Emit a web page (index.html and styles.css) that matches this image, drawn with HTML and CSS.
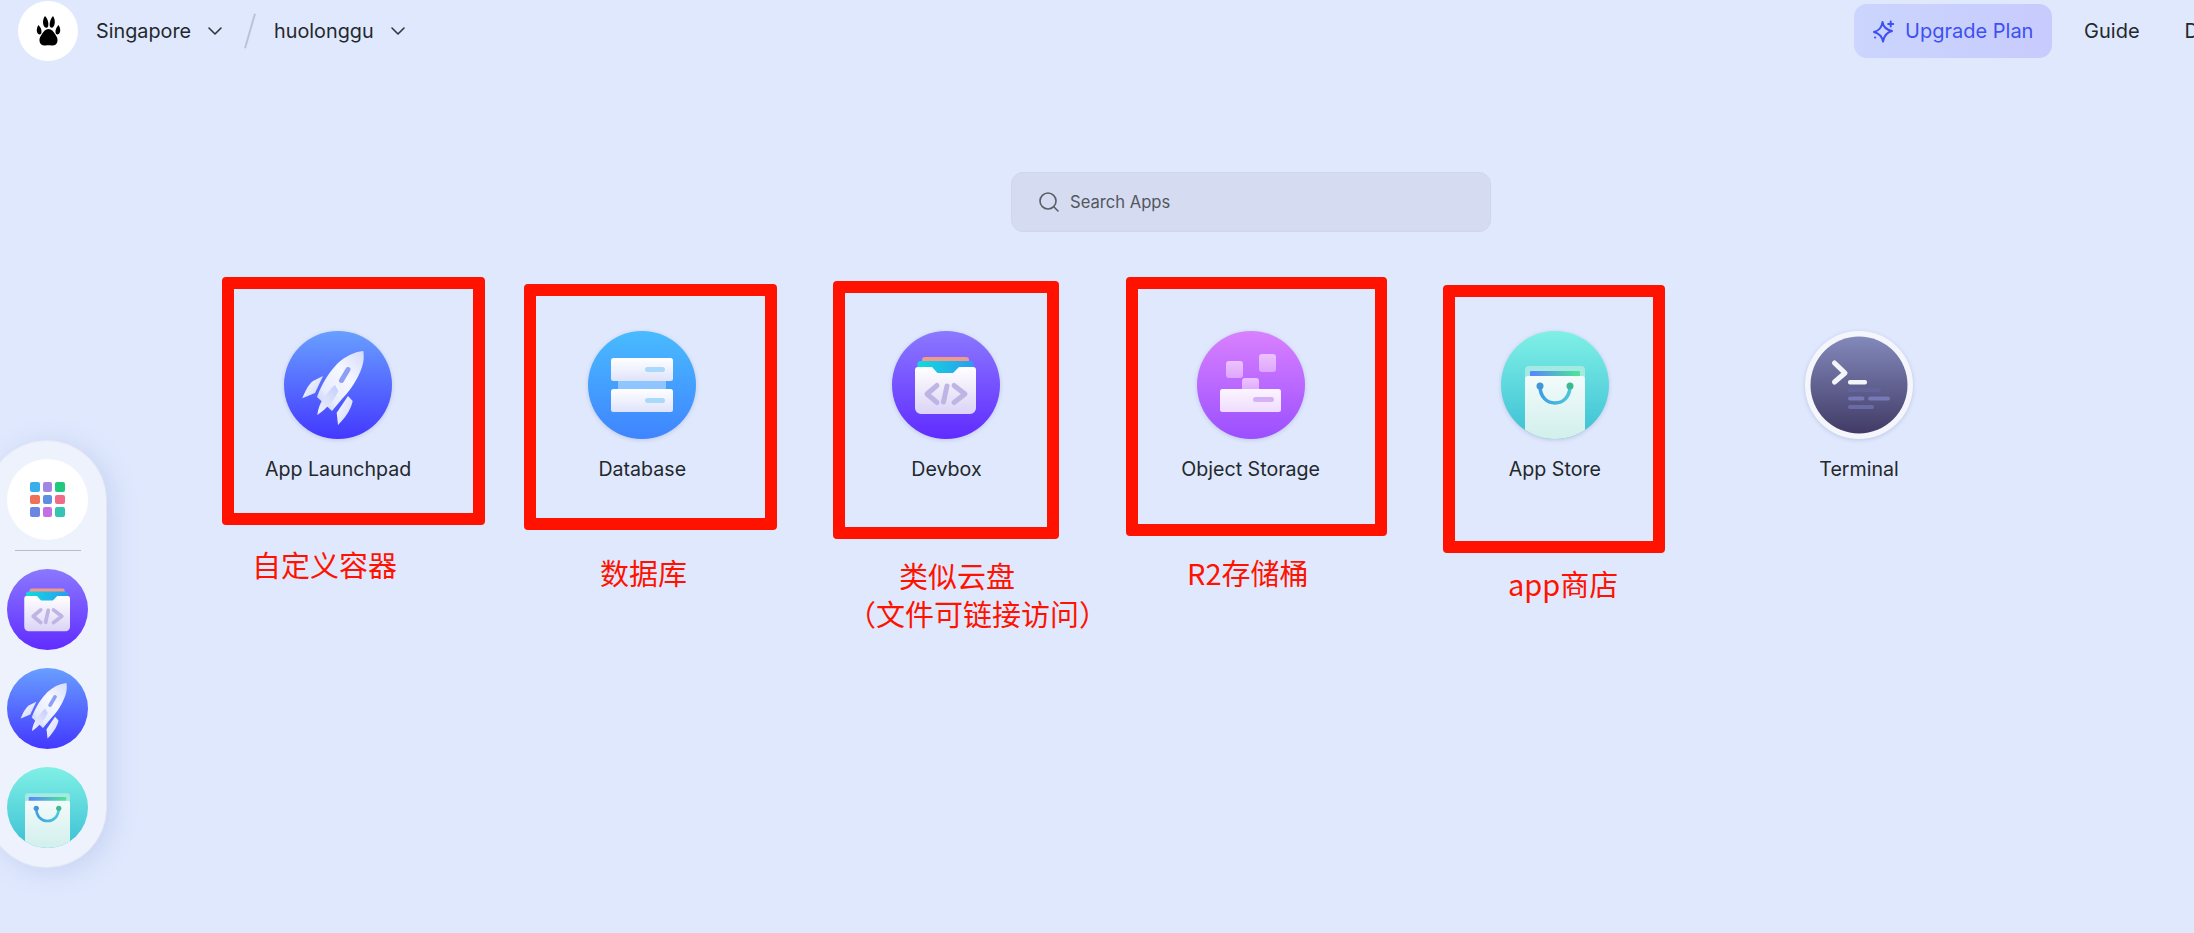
FILE: index.html
```html
<!DOCTYPE html>
<html lang="en">
<head>
  <meta charset="UTF-8" />
  <meta name="viewport" content="width=device-width, initial-scale=1" />
  <title>Desktop</title>
  <link rel="stylesheet" href="styles.css">
</head>
<body>

  <!-- shared gradients and icons -->
  <svg class="svg-defs" xmlns="http://www.w3.org/2000/svg" aria-hidden="true">
    <defs>
      <linearGradient id="gRocket" x1="0" y1="0" x2="0" y2="1"><stop offset="0" stop-color="#689fff"/><stop offset="1" stop-color="#4338ff"/></linearGradient>
      <linearGradient id="gDb" x1="0" y1="0" x2="0" y2="1"><stop offset="0" stop-color="#49bbff"/><stop offset="1" stop-color="#3f84ff"/></linearGradient>
      <linearGradient id="gDev" x1="0" y1="0" x2="0" y2="1"><stop offset="0" stop-color="#8b78ff"/><stop offset="1" stop-color="#602cff"/></linearGradient>
      <linearGradient id="gObj" x1="0" y1="0" x2="0" y2="1"><stop offset="0" stop-color="#d981ff"/><stop offset="1" stop-color="#9b4fff"/></linearGradient>
      <linearGradient id="gStore" x1="0" y1="0" x2="0" y2="1"><stop offset="0" stop-color="#80f0e6"/><stop offset="1" stop-color="#3cc0d4"/></linearGradient>
      <linearGradient id="gTerm" x1="0" y1="0" x2="0" y2="1"><stop offset="0" stop-color="#8389bb"/><stop offset="1" stop-color="#413b66"/></linearGradient>
      <linearGradient id="gWhite" x1="0" y1="0" x2="0" y2="1"><stop offset="0" stop-color="#ffffff"/><stop offset="1" stop-color="#dfe3fb"/></linearGradient>
      <linearGradient id="gBody" x1="1" y1="0" x2="0" y2="1"><stop offset="0" stop-color="#d5dbfc"/><stop offset=".4" stop-color="#f6f8ff"/><stop offset=".75" stop-color="#e8ecff"/><stop offset="1" stop-color="#bcc5f8"/></linearGradient>
      <linearGradient id="gFin" x1="0" y1="0" x2="1" y2="1"><stop offset="0" stop-color="#fbfcff"/><stop offset="1" stop-color="#ccd3fb"/></linearGradient>
      <linearGradient id="gFinMid" x1="0" y1="1" x2="1" y2="0"><stop offset="0" stop-color="#f0f3ff"/><stop offset="1" stop-color="#c5cdfb"/></linearGradient>
      <linearGradient id="gLid" x1="0" y1="0" x2="1" y2="0"><stop offset="0" stop-color="#10dbdc"/><stop offset="1" stop-color="#2b9cf2"/></linearGradient>
      <linearGradient id="gFile" x1="0" y1="0" x2="0" y2="1"><stop offset="0" stop-color="#ffffff"/><stop offset="1" stop-color="#dcd3f6"/></linearGradient>
      <linearGradient id="gBox" x1="0" y1="0" x2="0" y2="1"><stop offset="0" stop-color="#fbf5ff"/><stop offset="1" stop-color="#efdcff"/></linearGradient>
      <linearGradient id="gCube" x1="0" y1="0" x2="0" y2="1"><stop offset="0" stop-color="#ecc3ff"/><stop offset="1" stop-color="#dea6fe"/></linearGradient>
      <linearGradient id="gBag" x1="0" y1="0" x2="0" y2="1"><stop offset="0" stop-color="#f3fbfb"/><stop offset="1" stop-color="#cdeeea"/></linearGradient>
      <linearGradient id="gStripe" x1="0" y1="0" x2="1" y2="0"><stop offset="0" stop-color="#5a84ff"/><stop offset="1" stop-color="#4ce795"/></linearGradient>
      <linearGradient id="gHandle" x1="0" y1="0" x2="1" y2="0"><stop offset="0" stop-color="#3d9fe6"/><stop offset="1" stop-color="#4bc6dd"/></linearGradient>
      <clipPath id="clipCircle"><circle cx="54" cy="54" r="54"/></clipPath>

      <symbol id="iconRocket" viewBox="0 0 108 108">
        <circle cx="54" cy="54" r="54" fill="url(#gRocket)"/>
        <path d="M18.300 67.300C21 60 25 53 29 50L39 45 31 62Z" fill="url(#gFin)"/>
        <path d="M54 94L52.700 81.700 64 65 68.700 70C67 79 60 88 54 94Z" fill="url(#gFin)"/>
        <path d="M79.300 20C70 21 62 25 54 32 46 40 38 52 33 66L48 80 58 68C66 60 74 48 78 36 80 30 80 25 79.300 20Z" fill="url(#gBody)"/>
        <path d="M33.300 84C34 78 36 72 39.300 68 43 62 47 57 51 54L54.300 60C52 65 49 70 46 73 42 77 38 81 33.300 84Z" fill="url(#gFinMid)"/>
        <path d="M64 38.500L57.500 49.500" stroke="#8f9ff5" stroke-width="5" stroke-linecap="round" fill="none"/>
      </symbol>

      <symbol id="iconDb" viewBox="0 0 108 108">
        <circle cx="54" cy="54" r="54" fill="url(#gDb)"/>
        <rect x="30" y="48" width="48" height="12" fill="#fff" opacity=".4"/>
        <rect x="23" y="27" width="62" height="23" rx="2.5" fill="url(#gWhite)"/>
        <rect x="23" y="58" width="62" height="23" rx="2.5" fill="url(#gWhite)"/>
        <rect x="57" y="36" width="20" height="5" rx="2.5" fill="#a9dafc"/>
        <rect x="57" y="67" width="20" height="5" rx="2.5" fill="#a9dafc"/>
      </symbol>

      <symbol id="iconDev" viewBox="0 0 108 108">
        <circle cx="54" cy="54" r="54" fill="url(#gDev)"/>
        <rect x="30" y="26" width="47" height="12" rx="3" fill="#f29a88"/>
        <rect x="25.500" y="30" width="56" height="14" rx="3" fill="url(#gLid)"/>
        <path d="M23 39a3 3 0 0 1 3-3H40l5 5.500a2 2 0 0 0 1.500.500H60a2 2 0 0 0 1.500-.500L67 36H81a3 3 0 0 1 3 3V77a6 6 0 0 1-6 6H29a6 6 0 0 1-6-6Z" fill="url(#gFile)"/>
        <path d="M45 54.500L35 63 45 71.500M62 54.500L73 63 62 71.500M55 55L51.500 71" stroke="#bdb6e5" stroke-width="5" stroke-linecap="round" stroke-linejoin="round" fill="none"/>
      </symbol>

      <symbol id="iconObj" viewBox="0 0 108 108">
        <circle cx="54" cy="54" r="54" fill="url(#gObj)"/>
        <rect x="29" y="30" width="17" height="17" rx="3" fill="url(#gCube)"/>
        <rect x="62" y="23" width="17" height="18" rx="3" fill="url(#gCube)"/>
        <rect x="45" y="47" width="17" height="14" rx="3" fill="url(#gCube)"/>
        <rect x="23" y="58" width="61" height="23" rx="2.500" fill="url(#gBox)"/>
        <rect x="56" y="66" width="21" height="5" rx="2.500" fill="#d6b0f6"/>
      </symbol>

      <symbol id="iconStore" viewBox="0 0 108 108">
        <circle cx="54" cy="54" r="54" fill="url(#gStore)"/>
        <g clip-path="url(#clipCircle)">
          <rect x="24" y="35" width="60" height="20" rx="4" fill="#a3eae3"/>
          <rect x="29" y="40" width="50" height="8" rx="1" fill="url(#gStripe)"/>
          <rect x="24" y="45" width="60" height="70" rx="3" fill="url(#gBag)"/>
        </g>
        <path d="M39 55C39 66 46 72 54 72S69 66 69 55" stroke="url(#gHandle)" stroke-width="3.500" fill="none"/>
        <circle cx="39" cy="55" r="3.500" fill="#3f97d8"/>
        <circle cx="69" cy="55" r="3.500" fill="#3dba92"/>
      </symbol>

      <symbol id="iconTerm" viewBox="0 0 108 108">
        <circle cx="54" cy="54" r="54" fill="#f5f6fb"/>
        <circle cx="54" cy="54" r="48.500" fill="url(#gTerm)"/>
        <path d="M29.500 32L40 42 29.500 51" stroke="#f4f5fb" stroke-width="5" stroke-linecap="round" stroke-linejoin="round" fill="none"/>
        <rect x="43" y="49" width="19" height="4.500" rx="2" fill="#f4f5fb"/>
        <rect x="43" y="57" width="33" height="4" rx="2" fill="#62639a"/>
        <rect x="43" y="65.500" width="16.500" height="4" rx="2" fill="#7778b8"/>
        <rect x="63" y="65.500" width="22" height="4" rx="2" fill="#7778b8"/>
        <rect x="43" y="74" width="26" height="4" rx="2" fill="#6a6ba6"/>
      </symbol>
    </defs>
  </svg>

  <div class="desktop">

    <header class="topbar">
      <div class="logo">
        <svg width="25" height="30" viewBox="0 0 25 30">
          <path d="M2.500 9C4.500 11 5.800 14 5.500 16.500 5.200 18.500 3.500 19 2 17.800 .3 16 .3 12 2.500 9Z"/>
          <path d="M9 0C11.500 2.500 12.800 6 12.300 9.500 12 12 9.800 12.500 8.400 10.800 6.500 8 6.500 3.500 9 0Z"/>
          <path d="M17 0C19 3 19.500 7.500 17.600 10.500 16.300 12.500 14 12 13.700 9.500 13.300 6 14.800 2.500 17 0Z"/>
          <path d="M22.500 9C24.700 12 24.700 16 23 17.800 21.500 19 19.800 18.500 19.500 16.500 19.200 14 20.500 11 22.500 9Z"/>
          <path d="M12.500 13C15.500 13 17.500 15.500 19 18 20.500 20.500 21.800 22 21.500 25 21.200 28.500 18 30 15.500 29.500 13.500 29 11.500 29 9.500 29.500 7 30 3.800 28.500 3.500 25 3.200 22 4.500 20.500 6 18 7.500 15.500 9.500 13 12.500 13Z"/>
        </svg>
      </div>
      <span class="crumb">Singapore</span>
      <svg class="chevron" width="14" height="8" viewBox="0 0 14 8"><path d="M1 1l6 6 6-6"/></svg>
      <span class="crumb-slash"></span>
      <span class="crumb">huolonggu</span>
      <svg class="chevron" width="14" height="8" viewBox="0 0 14 8"><path d="M1 1l6 6 6-6"/></svg>

      <div class="topbar-right">
        <button class="upgrade">
          <svg width="23" height="23" viewBox="0 0 23 23" fill="none" stroke="#3d50f2" stroke-width="2" stroke-linejoin="round" stroke-linecap="round">
            <path d="M10.500 2Q11.500 9 20 11 12.500 13 11 21.500 9.500 14 2 12 9.500 10 10.500 2Z"/>
            <path d="M18.700 1.500v5M16.200 4h5"/>
            <path d="M3 17.500h.2"/>
          </svg>
          Upgrade Plan
        </button>
        <span class="nav-link">Guide</span>
        <span class="nav-link">Docs</span>
      </div>
    </header>

    <main class="launcher">
      <div class="search">
        <svg width="20" height="20" viewBox="0 0 20 20" fill="none" stroke="#5b5e66" stroke-width="1.600" stroke-linecap="round"><circle cx="9" cy="9" r="8"/><path d="M15 15l4 4"/></svg>
        <span>Search Apps</span>
      </div>

      <div class="app-grid">
        <div class="app">
          <svg class="app-icon"><use href="#iconRocket"/></svg>
          <span>App Launchpad</span>
        </div>
        <div class="app">
          <svg class="app-icon"><use href="#iconDb"/></svg>
          <span>Database</span>
        </div>
        <div class="app">
          <svg class="app-icon"><use href="#iconDev"/></svg>
          <span>Devbox</span>
        </div>
        <div class="app">
          <svg class="app-icon"><use href="#iconObj"/></svg>
          <span>Object Storage</span>
        </div>
        <div class="app">
          <svg class="app-icon"><use href="#iconStore"/></svg>
          <span>App Store</span>
        </div>
        <div class="app">
          <svg class="app-icon"><use href="#iconTerm"/></svg>
          <span>Terminal</span>
        </div>
      </div>
    </main>

    <nav class="dock">
      <div class="dock-home">
        <div class="tiles">
          <i class="t1"></i><i class="t2"></i><i class="t3"></i>
          <i class="t4"></i><i class="t5"></i><i class="t6"></i>
          <i class="t7"></i><i class="t8"></i><i class="t9"></i>
        </div>
      </div>
      <div class="dock-line"></div>
      <svg class="dock-icon"><use href="#iconDev"/></svg>
      <svg class="dock-icon"><use href="#iconRocket"/></svg>
      <svg class="dock-icon"><use href="#iconStore"/></svg>
    </nav>

    <!-- red annotations drawn over the screenshot -->
    <div class="mark mark-launchpad"></div>
    <div class="mark mark-database"></div>
    <div class="mark mark-devbox"></div>
    <div class="mark mark-storage"></div>
    <div class="mark mark-store"></div>
    <p class="note note-launchpad">自定义容器</p>
    <p class="note note-database">数据库</p>
    <p class="note note-devbox">类似云盘</p>
    <p class="note note-devbox-sub">（文件可链接访问）</p>
    <p class="note note-storage">R2存储桶</p>
    <p class="note note-store">app商店</p>

  </div>

</body>
</html>
```

FILE: styles.css
```css
* {
  margin: 0;
  padding: 0;
  box-sizing: border-box;
}
body {
  background: #dfe8fd;
  color: #24282c;
  font-family: Inter, "Liberation Sans", sans-serif;
  font-size: 20px;
  overflow: hidden;
}
.svg-defs {
  position: absolute;
  width: 0;
  height: 0;
}
.desktop {
  position: relative;
  width: 2194px;
  height: 933px;
  overflow: hidden;
}

/* top bar */
.topbar {
  display: flex;
  align-items: center;
  width: 2233px;
  height: 62px;
  padding-left: 18px;
}
.logo {
  display: flex;
  align-items: center;
  justify-content: center;
  width: 60px;
  height: 60px;
  border-radius: 50%;
  background: #fff;
  margin-right: 18px;
}
.crumb {
  font-size: 19.800px;
  line-height: 24px;
}
.chevron {
  margin-left: 17px;
  fill: none;
  stroke: #33373d;
  stroke-width: 1.6;
  stroke-linecap: round;
  stroke-linejoin: round;
}
.crumb-slash {
  width: 2px;
  height: 36px;
  margin: 0 23px 0 27px;
  background: #bcc3d4;
  transform: rotate(16deg);
}
.topbar-right {
  display: flex;
  align-items: center;
  margin-left: auto;
}
.upgrade {
  display: flex;
  align-items: center;
  gap: 10px;
  width: 198px;
  height: 54px;
  padding-left: 18px;
  border: none;
  border-radius: 13px;
  background: linear-gradient(to right, #cbd5fd, #c7cbfd);
  color: #3d50f2;
  font: inherit;
}
.nav-link {
  margin-left: 32px;
}
.nav-link + .nav-link {
  margin-left: 45px;
}

/* launcher */
.launcher {
  width: 2130px;
  margin-left: 186px;
}
.search {
  display: flex;
  align-items: center;
  gap: 11px;
  width: 480px;
  height: 60px;
  margin: 110px auto 0;
  padding-left: 27px;
  background: #d5dbf0;
  border: 1px solid #cfd7ec;
  border-radius: 12px;
  color: #54575e;
  font-size: 16.600px;
}
.app-grid {
  display: grid;
  grid-template-columns: repeat(7, 304.200px);
  margin-top: 99px;
}
.app {
  display: flex;
  flex-direction: column;
  align-items: center;
  gap: 18px;
  font-size: 19.600px;
  line-height: 24px;
}
.app-icon {
  width: 108px;
  height: 108px;
  filter: drop-shadow(0 1px 2px rgba(60, 70, 130, 0.2));
}

/* left dock */
.dock {
  position: absolute;
  left: -14px;
  top: 440px;
  display: flex;
  flex-direction: column;
  align-items: flex-start;
  width: 121px;
  height: 428px;
  padding: 18px 0 0 20px;
  background: #eef2fd;
  border: 1px solid #e4e7f2;
  border-radius: 60px;
  box-shadow: 6px 4px 24px rgba(130, 150, 210, 0.25);
}
.dock-home {
  display: flex;
  align-items: center;
  justify-content: center;
  width: 81px;
  height: 81px;
  border-radius: 50%;
  background: #fff;
}
.tiles {
  display: grid;
  grid-template-columns: repeat(3, 9.500px);
  gap: 3.200px;
}
.tiles i {
  display: block;
  height: 9.500px;
  border-radius: 2px;
}
.t1 { background: #38aeec; }
.t2 { background: #a186e4; }
.t3 { background: #22c87e; }
.t4 { background: #ec7358; }
.t5 { background: #5f90e0; }
.t6 { background: #f06b87; }
.t7 { background: #6a86e0; }
.t8 { background: #c56fe6; }
.t9 { background: #34c4b4; }
.dock-line {
  width: 66px;
  height: 1px;
  margin: 10px 0 18px 8px;
  background: #b9bdc8;
}
.dock-icon {
  width: 81px;
  height: 81px;
  margin-bottom: 18px;
}

/* annotations */
.mark {
  position: absolute;
  border: 12px solid #ff1300;
  border-radius: 4px;
}
.mark-launchpad { left: 222px; top: 277px; width: 263px; height: 248px; }
.mark-database { left: 524px; top: 284px; width: 253px; height: 246px; }
.mark-devbox { left: 833px; top: 281px; width: 226px; height: 258px; }
.mark-storage { left: 1126px; top: 277px; width: 261px; height: 259px; }
.mark-store { left: 1443px; top: 285px; width: 222px; height: 268px; }
.note {
  position: absolute;
  color: #ff1300;
  font-family: "Noto Sans CJK SC", "Liberation Sans", sans-serif;
  font-size: 29px;
  line-height: 38px;
  white-space: nowrap;
}
.note-launchpad { left: 252px; top: 545px; }
.note-database { left: 600px; top: 553px; }
.note-devbox { left: 899px; top: 556px; }
.note-devbox-sub { left: 847px; top: 594px; }
.note-storage { left: 1187px; top: 553px; }
.note-store { left: 1508px; top: 564px; }
```
